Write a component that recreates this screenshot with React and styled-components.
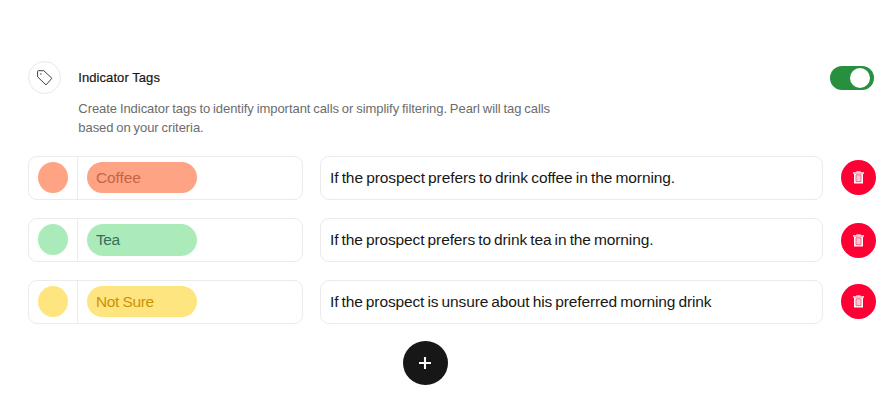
import React from 'react';
import styled, { createGlobalStyle } from 'styled-components';

const GlobalStyle = createGlobalStyle`
  * { box-sizing: border-box; }
  body { margin: 0; background: #fff; }
  button { border: 0; padding: 0; }
`;

const Page = styled.main`
  width: 891px;
  height: 420px;
  padding: 60px 15px 0 28px;
  font-family: "Liberation Sans", Arial, sans-serif;
  color: #171717;
  overflow: hidden;
`;

const Header = styled.header`
  display: flex;
  align-items: flex-start;
  height: 96px;
`;

const IconRing = styled.div`
  width: 33px;
  height: 33px;
  margin-top: 1px;
  border: 1px solid #e8e8e8;
  border-radius: 50%;
  display: grid;
  place-items: center;
`;

const Intro = styled.div`
  flex: 1;
  padding: 8px 0 0 17.3px;
`;

const Title = styled.h2`
  margin: 0;
  font-size: 13px;
  font-weight: 400;
  line-height: 19px;
  letter-spacing: 0.07px;
  -webkit-text-stroke: 0.2px #171717;
`;

const Description = styled.p`
  margin: 12px 0 0;
  font-size: 13px;
  line-height: 19px;
  color: #6c6c6c;
  white-space: nowrap;
`;

const Line = styled.span`
  display: block;
  letter-spacing: -0.05px;
  word-spacing: -0.7px;
`;

const Toggle = styled.button`
  width: 44px;
  height: 24.5px;
  margin: 5.5px 2px 0 0;
  padding-right: 4px;
  border-radius: 13px;
  background: #27903f;
  display: flex;
  align-items: center;
  justify-content: flex-end;
`;

const Knob = styled.span`
  width: 20px;
  height: 20px;
  border-radius: 50%;
  background: #fff;
`;

const Rows = styled.div`
  display: grid;
  gap: 18px;
`;

const Row = styled.div`
  display: grid;
  grid-template-columns: 275px 503px 35px;
  justify-content: start;
  column-gap: 17px;
  height: 44px;
`;

const Field = styled.div`
  display: flex;
  height: 44px;
  border: 1px solid #ebebeb;
  border-radius: 9px;
`;

const SwatchCell = styled.div`
  width: 49px;
  border-right: 1px solid #ebebeb;
  padding: ${p => p.$top}px 0 0 9px;
`;

const Swatch = styled.div`
  width: 30px;
  height: 31px;
  border-radius: 50%;
  background: ${p => p.$color};
`;

const Pill = styled.div`
  width: 110px;
  height: 31.5px;
  margin: ${p => p.$top}px 0 0 9px;
  padding-left: 9px;
  border-radius: 16px;
  background: ${p => p.$bg};
  color: ${p => p.$color};
  font-size: 15.5px;
  line-height: ${p => p.$leading}px;
  letter-spacing: ${p => p.$tracking};
  word-spacing: -0.5px;
`;

const Criteria = styled(Field)`
  padding-left: 9px;
  font-size: 15.5px;
  line-height: 42px;
  letter-spacing: ${p => p.$tracking};
  word-spacing: -1px;
  white-space: nowrap;
`;

const DeleteButton = styled.button`
  width: 35px;
  height: 35px;
  margin: ${p => p.$top}px 0 0 1px;
  border-radius: 50%;
  background: #ff0035;
  display: grid;
  place-items: center;
`;

const AddButton = styled.button`
  width: 44.5px;
  height: 44px;
  margin: 16.7px 0 0 375px;
  border-radius: 50%;
  background: #171717;
  display: grid;
  place-items: center;
`;

const tags = [
  { name: 'Coffee', text: 'If the prospect prefers to drink coffee in the morning.', bg: '#ffa385', color: '#c76542', top: 4.6, leading: 31.5, del: 3.5, nt: '-0.1px', tt: '-0.09px' },
  { name: 'Tea', text: 'If the prospect prefers to drink tea in the morning.', bg: '#abebba', color: '#34705b', top: 5.3, leading: 32, del: 4.5, nt: '-0.4px', tt: '-0.12px' },
  { name: 'Not Sure', text: 'If the prospect is unsure about his preferred morning drink', bg: '#ffe580', color: '#cd9100', top: 4.5, leading: 31.5, del: 3.5, nt: '-0.35px', tt: '-0.13px' },
];

const TagIcon = () => (
  <svg width="17" height="17" viewBox="0 0 17 17" fill="none" stroke="#404040" strokeWidth="1" strokeLinejoin="round">
    <path d="M1.6 2.4Q1.6 1.7 2.3 1.7H7.8L15.9 9.3L10 15.9L1.6 7.9Z" />
    <circle cx="4.9" cy="5" r=".7" fill="#404040" stroke="none" />
  </svg>
);

const TrashIcon = () => (
  <svg width="13" height="13" viewBox="0 0 13 13">
    <path d="M2 3V12.5H11V3Z" fill="#fff" />
    <path d="M1 2H12" stroke="#fff" strokeWidth="1.4" />
    <path d="M4.3 .9H8.7" stroke="#fff" strokeWidth="1" />
    <path d="M4 3.8H9V10.7H4Z" fill="#ffc5d1" stroke="#ff537a" strokeWidth=".9" />
  </svg>
);

const PlusIcon = () => (
  <svg width="14" height="14" viewBox="0 0 14 14" stroke="#fff" strokeWidth="2.1">
    <path d="M7 1V13M1 7H13" />
  </svg>
);

export default function App() {
  return (
    <>
      <GlobalStyle />
      <Page>
        <Header>
          <IconRing><TagIcon /></IconRing>
          <Intro>
            <Title>Indicator Tags</Title>
            <Description>
              <Line>Create Indicator tags to identify important calls or simplify filtering. Pearl will tag calls</Line>
              <Line>based on your criteria.</Line>
            </Description>
          </Intro>
          <Toggle aria-label="Enable indicator tags"><Knob /></Toggle>
        </Header>
        <Rows>
          {tags.map(t => (
            <Row key={t.name}>
              <Field>
                <SwatchCell $top={t.top}><Swatch $color={t.bg} /></SwatchCell>
                <Pill $top={t.top} $bg={t.bg} $color={t.color} $tracking={t.nt} $leading={t.leading}>{t.name}</Pill>
              </Field>
              <Criteria $tracking={t.tt}>{t.text}</Criteria>
              <DeleteButton $top={t.del} aria-label={`Delete ${t.name}`}><TrashIcon /></DeleteButton>
            </Row>
          ))}
        </Rows>
        <AddButton aria-label="Add tag"><PlusIcon /></AddButton>
      </Page>
    </>
  );
}
